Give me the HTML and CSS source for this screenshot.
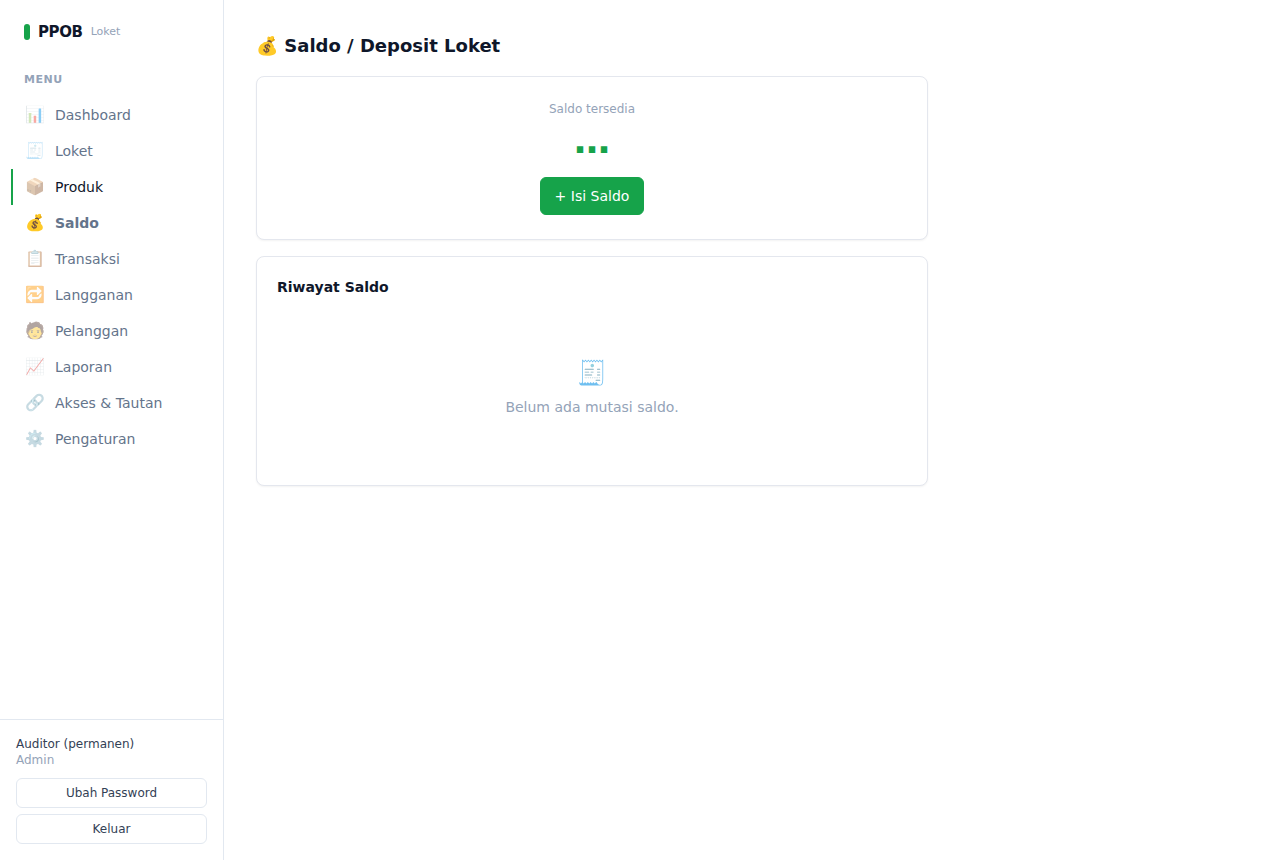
FILE: index.html
```html
<!DOCTYPE html>
<html lang="id">
<head>
  <meta charset="UTF-8">
  <meta name="viewport" content="width=device-width, initial-scale=1.0">
  <title>PPOB - Saldo</title>
  <link rel="stylesheet" href="styles.css">
</head>
<body>
  <div class="app">
    <aside class="sidebar">
      <div class="brand">
        <span class="brand-mark"></span>
        <span class="brand-name">PPOB</span>
        <span class="brand-sub">Loket</span>
      </div>
      <div class="nav-label">Menu</div>
      <nav class="nav">
        <a href="#dashboard"><span class="ico">📊</span>Dashboard</a>
        <a href="#loket"><span class="ico">🧾</span>Loket</a>
        <a href="#produk" class="current"><span class="ico">📦</span>Produk</a>
        <a href="#saldo" class="active"><span class="ico">💰</span>Saldo</a>
        <a href="#transaksi"><span class="ico">📋</span>Transaksi</a>
        <a href="#langganan"><span class="ico">🔁</span>Langganan</a>
        <a href="#pelanggan"><span class="ico">🧑</span>Pelanggan</a>
        <a href="#laporan"><span class="ico">📈</span>Laporan</a>
        <a href="#akses"><span class="ico">🔗</span>Akses &amp; Tautan</a>
        <a href="#pengaturan"><span class="ico">⚙️</span>Pengaturan</a>
      </nav>
      <div class="user">
        <div class="user-name">Auditor (permanen)</div>
        <div class="user-role">Admin</div>
        <button type="button" class="btn-line">Ubah Password</button>
        <button type="button" class="btn-line">Keluar</button>
      </div>
    </aside>

    <main class="main">
      <div class="page">
        <h1><span>💰</span> Saldo / Deposit Loket</h1>
        <section class="card balance">
          <div class="balance-label">Saldo tersedia</div>
          <div class="balance-value">…</div>
          <button type="button" class="btn">+ Isi Saldo</button>
        </section>
        <section class="card">
          <h2>Riwayat Saldo</h2>
          <div class="empty">
            <div class="empty-ico">🧾</div>
            <p>Belum ada mutasi saldo.</p>
          </div>
        </section>
      </div>
    </main>
  </div>
</body>
</html>
```
FILE: styles.css
```css
* {
  margin: 0;
  padding: 0;
  box-sizing: border-box;
}

body {
  font-family: "DejaVu Sans", sans-serif;
  font-size: 14px;
  line-height: 20px;
  color: #0f172a;
  background: #fff;
}

button {
  font-family: inherit;
  cursor: pointer;
}

.app {
  display: flex;
  min-height: 100vh;
}

/* Sidebar */
.sidebar {
  display: flex;
  flex-direction: column;
  flex: 0 0 224px;
  border-right: 1px solid #e2e8f0;
}

.brand {
  display: flex;
  align-items: center;
  gap: 8px;
  padding: 20px 24px;
  line-height: 24px;
}

.brand-mark {
  width: 6px;
  height: 16px;
  border-radius: 3px;
  background: #16a34a;
}

.brand-name {
  font-size: 15px;
  font-weight: 700;
  letter-spacing: -0.025em;
}

.brand-sub {
  font-size: 11px;
  color: #94a3b8;
}

.nav-label {
  padding: 6px 24px 7px;
  font-size: 11px;
  font-weight: 700;
  letter-spacing: 0.05em;
  text-transform: uppercase;
  color: #94a3b8;
}

.nav {
  flex: 1;
  padding: 0 12px;
}

.nav a {
  display: flex;
  align-items: center;
  gap: 10px;
  padding: 8px 12px;
  color: #64748b;
  text-decoration: none;
}

.nav a.current {
  color: #0f172a;
  box-shadow: -1px 0 0 #16a34a, inset 1px 0 0 #16a34a;
}

.nav a.active {
  font-weight: 700;
}

.ico {
  width: 21px;
  font-size: 16px;
  text-align: center;
  opacity: 0.45;
}

.active .ico {
  opacity: 1;
}

.user {
  display: flex;
  flex-direction: column;
  padding: 16px;
  border-top: 1px solid #e2e8f0;
  font-size: 12px;
  line-height: 16px;
  color: #334155;
}

.user-role {
  color: #94a3b8;
}

.btn-line {
  margin-top: 6px;
  padding: 6px 12px;
  border: 1px solid #e2e8f0;
  border-radius: 6px;
  background: #fff;
  font-size: 12px;
  line-height: 16px;
  color: #334155;
}

.user-role + .btn-line {
  margin-top: 10px;
}

/* Content */
.main {
  flex: 1;
  padding: 32px;
}

.page {
  max-width: 672px;
}

h1 {
  margin-bottom: 16px;
  font-size: 18px;
  line-height: 28px;
}

h2 {
  margin-bottom: 12px;
  font-size: 14px;
  line-height: 20px;
}

.card {
  margin-bottom: 16px;
  padding: 20px;
  border: 1px solid #e4e7ee;
  border-radius: 8px;
  background: #fff;
  box-shadow: 0 1px 2px rgba(0, 0, 0, 0.05);
}

.balance {
  padding: 24px;
  text-align: center;
}

.balance-label {
  margin-bottom: 4px;
  font-size: 12px;
  line-height: 16px;
  color: #94a3b8;
}

.balance-value {
  margin-bottom: 16px;
  font-size: 36px;
  font-weight: 700;
  line-height: 40px;
  color: #16a34a;
}

.btn {
  padding: 8px 14px;
  border: 1px solid #16a34a;
  border-radius: 6px;
  background: #16a34a;
  font-size: 14px;
  line-height: 20px;
  color: #fff;
}

.empty {
  padding: 48px 16px;
  text-align: center;
  color: #94a3b8;
}

.empty-ico {
  margin-bottom: 8px;
  font-size: 24px;
  line-height: 32px;
}
```
